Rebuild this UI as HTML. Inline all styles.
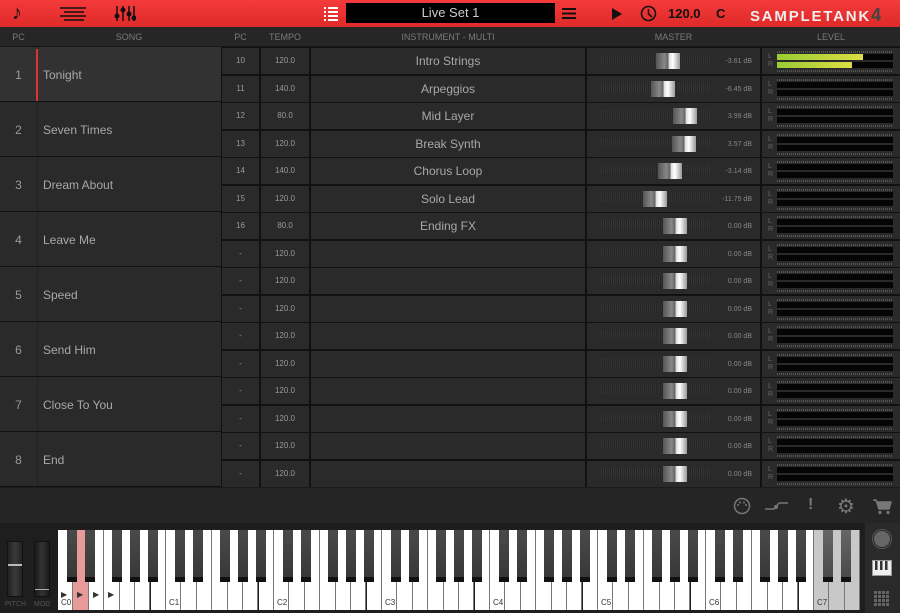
<!DOCTYPE html>
<html><head><meta charset="utf-8">
<style>
*{margin:0;padding:0;box-sizing:border-box}
body{width:900px;height:613px;overflow:hidden;background:#1c1c1c;font-family:"Liberation Sans",sans-serif;position:relative}
.abs{position:absolute}
#top{left:0;top:0;width:900px;height:27px;background:linear-gradient(#f43a3a,#de2a2a)}
#hdr{left:0;top:27px;width:900px;height:20px;background:#262626;color:#7a7a7a;font-size:9px;border-bottom:1px solid #151515}
#hdr span{position:absolute;top:5px;text-align:center}
.cell{position:absolute;background:#2a2a2a;color:#9a9a9a;text-align:center}
.song{position:absolute;left:0;width:221px;height:54px;background:#2a2a2a}
.song .n{position:absolute;left:0;width:37px;top:21px;text-align:center;color:#9a9a9a;font-size:12px}
.song .t{position:absolute;left:43px;top:21px;color:#a8a8a8;font-size:12px}
.song .sep{position:absolute;left:37px;top:0;width:1px;height:54px;background:#232323}
.trk{position:absolute;height:8px;background:repeating-linear-gradient(90deg,#333 0 1px,#262626 1px 2px)}
.knob{position:absolute;width:24px;height:16px;background:linear-gradient(90deg,#555,#888 35%,#666 50%,#ddd 55%,#fff 70%,#999)}
.db{position:absolute;font-size:7px;color:#888;text-align:right;width:40px}
.met{position:absolute;left:777px;width:116px;height:6px;background:#050505}
.tick{position:absolute;left:777px;width:116px;height:2px;background:repeating-linear-gradient(90deg,#555 0 1px,#2a2a2a 1px 2px)}
.lr{position:absolute;left:768px;font-size:7px;color:#666}
.wk{position:absolute;top:530px;height:80px;background:#fff;border-right:1px solid #777}
.bk{position:absolute;top:530px;height:52px;width:10px;background:linear-gradient(#4a4a4a,#383838);border-bottom:5px solid #111}
.kl{position:absolute;top:598px;font-size:8px;color:#333}
</style></head><body>
<div class="abs" style="left:0;top:47px;width:900px;height:440px;background:#111"></div>
<div id="top" class="abs">
 <div class="abs" style="left:12px;top:2px;font-size:20px;color:#111">♪</div>
 <svg class="abs" style="left:58px;top:5px" width="30" height="16"><g stroke="#111" stroke-width="1.5"><line x1="2" y1="3" x2="28" y2="3"/><line x1="6" y1="7" x2="26" y2="7"/><line x1="2" y1="11" x2="28" y2="11"/><line x1="6" y1="15" x2="26" y2="15"/></g></svg>
 <svg class="abs" style="left:114px;top:5px" width="22" height="17"><g stroke="#111" stroke-width="1.5"><line x1="3" y1="1" x2="3" y2="16"/><line x1="9" y1="1" x2="9" y2="16"/><line x1="15" y1="1" x2="15" y2="16"/><line x1="20" y1="1" x2="20" y2="16"/></g><g fill="#111"><circle cx="3" cy="11" r="2.5"/><circle cx="9" cy="5" r="2.5"/><circle cx="15" cy="9" r="2.5"/><circle cx="20" cy="13" r="2.5"/></g></svg>
 <svg class="abs" style="left:323px;top:6px" width="16" height="16"><g fill="#fff"><rect x="1" y="1" width="2" height="2"/><rect x="5" y="1" width="10" height="2"/><rect x="1" y="5" width="2" height="2"/><rect x="5" y="5" width="10" height="2"/><rect x="1" y="9" width="2" height="2"/><rect x="5" y="9" width="10" height="2"/><rect x="1" y="13" width="2" height="2"/><rect x="5" y="13" width="10" height="2"/></g></svg>
 <div class="abs" style="left:346px;top:3px;width:209px;height:20px;background:#000;color:#ccc;font-size:13px;text-align:center;line-height:20px">Live Set 1</div>
 <svg class="abs" style="left:561px;top:7px" width="16" height="13"><g stroke="#111" stroke-width="2"><line x1="1" y1="2" x2="15" y2="2"/><line x1="1" y1="6.5" x2="15" y2="6.5"/><line x1="1" y1="11" x2="15" y2="11"/></g></svg>
 <svg class="abs" style="left:611px;top:7px" width="12" height="14"><path d="M1 1L11 7L1 13Z" fill="#111"/></svg>
 <svg class="abs" style="left:640px;top:5px" width="17" height="17"><circle cx="8.5" cy="8.5" r="7" fill="none" stroke="#111" stroke-width="1.5"/><path d="M8.5 4V9L12 12" fill="none" stroke="#111" stroke-width="1.5"/></svg>
 <div class="abs" style="left:668px;top:6px;font-size:13px;font-weight:bold;color:#111">120.0</div>
 <div class="abs" style="left:716px;top:6px;font-size:13px;font-weight:bold;color:#111">C</div>
 <div class="abs" style="left:750px;top:5px;font-size:15px;font-weight:bold;color:#eee;letter-spacing:1.8px">SAMPLETANK<span style="color:#444;font-size:18px;letter-spacing:0">4</span></div>
</div>
<div id="hdr" class="abs">
 <span style="left:0;width:37px">PC</span><span style="left:37px;width:184px">SONG</span>
 <span style="left:222px;width:37px">PC</span><span style="left:261px;width:48px">TEMPO</span>
 <span style="left:311px;width:274px">INSTRUMENT - MULTI</span><span style="left:587px;width:173px">MASTER</span><span style="left:762px;width:138px">LEVEL</span>
</div>
<div id="rows"></div>
<div class="abs" style="left:0;top:487px;width:900px;height:36px;background:#252525;border-top:1px solid #1a1a1a"></div>
<svg class="abs" style="left:732px;top:497px" width="20" height="18"><circle cx="10" cy="9" r="7.5" fill="none" stroke="#777" stroke-width="1.5"/><g fill="#777"><circle cx="6" cy="8" r="1"/><circle cx="8" cy="5.5" r="1"/><circle cx="12" cy="5.5" r="1"/><circle cx="14" cy="8" r="1"/></g></svg>
<svg class="abs" style="left:764px;top:499px" width="26" height="14"><path d="M1 10H10L15 4H24" fill="none" stroke="#777" stroke-width="1.5"/><circle cx="12" cy="8" r="2" fill="#777"/></svg>
<div class="abs" style="left:808px;top:496px;font-size:16px;font-weight:bold;color:#777">!</div>
<div class="abs" style="left:837px;top:494px;font-size:20px;color:#777">⚙</div>
<svg class="abs" style="left:872px;top:498px" width="20" height="17"><path d="M1 2H4L7 11H17L19 4H5" fill="#777" stroke="#777" stroke-width="1.5"/><circle cx="8" cy="14.5" r="1.6" fill="#777"/><circle cx="16" cy="14.5" r="1.6" fill="#777"/></svg>
<div class="abs" style="left:0;top:523px;width:900px;height:90px;background:#1e1e1e"></div>
<div class="abs" style="left:7px;top:541px;width:16px;height:56px;background:linear-gradient(90deg,#222,#3a3a3a,#222);border:1px solid #111"></div>
<div class="abs" style="left:8px;top:564px;width:14px;height:2px;background:#bbb"></div>
<div class="abs" style="left:34px;top:541px;width:16px;height:56px;background:linear-gradient(90deg,#1a1a1a,#333,#1a1a1a);border:1px solid #111"></div>
<div class="abs" style="left:35px;top:589px;width:14px;height:1px;background:#aaa"></div>
<div class="abs" style="left:5px;top:601px;font-size:7px;color:#555">PITCH</div>
<div class="abs" style="left:34px;top:601px;font-size:7px;color:#555">MOD</div>
<div id="kb"></div>
<div class="abs" style="left:865px;top:523px;width:35px;height:90px;background:#2a2a2a"></div>
<svg class="abs" style="left:872px;top:529px" width="20" height="20"><circle cx="10" cy="10" r="8" fill="#666"/><circle cx="10" cy="10" r="9.5" fill="none" stroke="#555"/></svg>
<svg class="abs" style="left:872px;top:560px" width="20" height="16"><rect x="0.5" y="0.5" width="19" height="15" fill="#eee" stroke="#999"/><g fill="#333"><rect x="3" y="1" width="2.5" height="9"/><rect x="8" y="1" width="2.5" height="9"/><rect x="13" y="1" width="2.5" height="9"/></g></svg>
<svg class="abs" style="left:874px;top:591px" width="16" height="16"><g fill="#666" id="grid"></g></svg>
<script>
var r=document.getElementById('rows'),h='';
var songs=['Tonight','Seven Times','Dream About','Leave Me','Speed','Send Him','Close To You','End'];
for(var i=0;i<8;i++){var y=47+i*55;h+='<div class="song" style="top:'+y+'px;'+(i==0?'background:#323232':'')+'"><div class="sep"></div><div class="n">'+(i+1)+'</div><div class="t">'+songs[i]+'</div>'+(i==0?'<div style="position:absolute;left:36px;top:2px;width:2px;height:52px;background:#d33"></div>':'')+'</div>';}
var ins=['Intro Strings','Arpeggios','Mid Layer','Break Synth','Chorus Loop','Solo Lead','Ending FX'];
var pcs=['10','11','12','13','14','15','16'],tmp=['120.0','140.0','80.0','120.0','140.0','120.0','80.0'];
var dbs=['-3.61 dB','-6.45 dB','3.99 dB','3.57 dB','-3.14 dB','-11.75 dB'],kx=[656,651,673,672,658,643];
for(var i=0;i<16;i++){var y=48+i*27.5,hh=26;
 var pc=i<7?pcs[i]:'-',t=i<7?tmp[i]:'120.0',nm=i<7?ins[i]:'',d=i<6?dbs[i]:'0.00 dB',k=i<6?kx[i]:663;
 h+='<div class="cell" style="left:222px;top:'+y+'px;width:37px;height:'+hh+'px;font-size:8px;line-height:'+hh+'px">'+pc+'</div>';
 h+='<div class="cell" style="left:261px;top:'+y+'px;width:48px;height:'+hh+'px;font-size:8px;line-height:'+hh+'px">'+t+'</div>';
 h+='<div class="cell" style="left:311px;top:'+y+'px;width:274px;height:'+hh+'px;font-size:12px;line-height:'+hh+'px;color:#a8a8a8">'+nm+'</div>';
 h+='<div class="cell" style="left:587px;top:'+y+'px;width:173px;height:'+hh+'px"></div>';
 h+='<div class="trk" style="left:601px;top:'+(y+7)+'px;width:109px"></div><div class="trk" style="left:601px;top:'+(y+13)+'px;width:109px;height:3px"></div>';
 h+='<div class="knob" style="left:'+k+'px;top:'+(y+5)+'px"></div>';
 h+='<div class="db" style="left:712px;top:'+(y+10)+'px">'+d+'</div>';
 h+='<div class="cell" style="left:762px;top:'+y+'px;width:138px;height:'+hh+'px"></div>';
 h+='<div class="tick" style="top:'+(y+3)+'px"></div><div class="met" style="top:'+(y+6)+'px"></div><div class="met" style="top:'+(y+14)+'px"></div><div class="tick" style="top:'+(y+22)+'px"></div>';
 h+='<div class="lr" style="top:'+(y+5)+'px">L</div><div class="lr" style="top:'+(y+13)+'px">R</div>';
}
h+='<div style="position:absolute;left:777px;top:54px;width:86px;height:6px;background:linear-gradient(90deg,#9c3,#dd4)"></div><div style="position:absolute;left:777px;top:62px;width:75px;height:6px;background:linear-gradient(90deg,#9c3,#dd4)"></div>';
r.innerHTML=h;
var kb='',w=108/7,x0=58,off=[9,27,54,72,90];
for(var j=0;j<52;j++){var x=x0+j*w,g=j>=49?'#c8c8c8':(j==1?'#e89a9a':'#fff');kb+='<div class="wk" style="left:'+x.toFixed(1)+'px;width:'+(w).toFixed(1)+'px;background:'+g+'"></div>';
 if(j%7==0){var o=j/7;kb+='<div class="kl" style="left:'+(x+3).toFixed(1)+'px">C'+o+'</div>';}}
for(var o=0;o<8;o++)for(var b=0;b<5;b++){var x=x0+o*108+off[b];if(x>855)continue;kb+='<div class="bk" style="left:'+x.toFixed(1)+'px'+(o>=7?';background:linear-gradient(#666,#4a4a4a)':'')+'"></div>';}
kb+='<div class="kl" style="left:61px;top:590px;font-size:8px">▶</div><div class="kl" style="left:77px;top:590px">▶</div><div class="kl" style="left:93px;top:590px">▶</div><div class="kl" style="left:108px;top:590px">▶</div>';
document.getElementById('kb').innerHTML=kb;
var g='';for(var a=0;a<4;a++)for(var c=0;c<4;c++)g+='<rect x="'+(a*4)+'" y="'+(c*4)+'" width="3" height="3"/>';document.getElementById('grid').innerHTML=g;
</script>
</body></html>
